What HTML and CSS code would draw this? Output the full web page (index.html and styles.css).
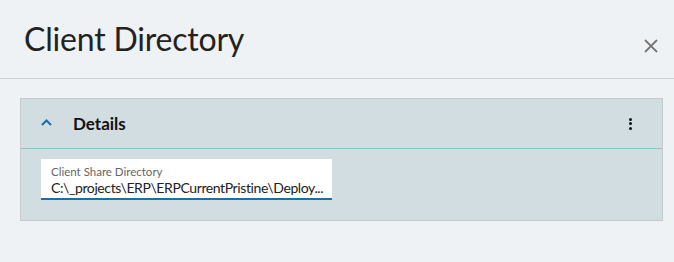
FILE: index.html
```html
<!DOCTYPE html>
<html lang="en">
<head>
    <meta charset="UTF-8">
    <meta name="viewport" content="width=device-width, initial-scale=1.0">
    <title>Client Directory</title>
    <link rel="stylesheet" href="styles.css">
</head>
<body>
    <div class="dialog">
        <div class="dialog-header">
            <h1>Client Directory</h1>
            <button class="close-btn" aria-label="Close">
                <svg width="14" height="14" viewBox="0 0 14 14">
                    <path d="M1 1L13 13M13 1L1 13" stroke="#777" stroke-width="1.8" fill="none"/>
                </svg>
            </button>
        </div>

        <div class="panel">
            <div class="panel-header">
                <span class="chevron">
                    <svg width="11" height="7" viewBox="0 0 11 7">
                        <path d="M1 6L5.5 1.5L10 6" stroke="#1f6e9e" stroke-width="2" fill="none"/>
                    </svg>
                </span>
                <span class="panel-title">Details</span>
                <span class="kebab">
                    <i></i><i></i><i></i>
                </span>
            </div>

            <div class="panel-body">
                <div class="field">
                    <label>Client Share Directory</label>
                    <div class="field-value">C:\_projects\ERP\ERPCurrentPristine\Deploy...</div>
                </div>
            </div>
        </div>
    </div>
</body>
</html>
```

FILE: styles.css
```css
* {
    margin: 0;
    padding: 0;
    box-sizing: border-box;
}

html, body {
    width: 100%;
    height: 100%;
    background-color: #eff2f5;
}

body {
    font-family: Lato, "Liberation Sans", sans-serif;
    color: #222;
}

.dialog-header {
    display: flex;
    align-items: center;
    justify-content: space-between;
    height: 79px;
    padding: 0 16px 0 24px;
    border-bottom: 1px solid #cdd1d4;
}

.dialog-header h1 {
    font-size: 32px;
    font-weight: 400;
    line-height: 40px;
    letter-spacing: -0.2px;
    color: #222;
}

.close-btn {
    display: flex;
    background: none;
    border: none;
    margin-top: 14px;
    cursor: pointer;
}

.panel {
    margin: 19px 11px 0 20px;
    background-color: #d1dde1;
    border: 1px solid #c6cacc;
}

.panel-header {
    display: flex;
    align-items: center;
    height: 50px;
    padding: 0 30px 0 20px;
    border-bottom: 1px solid #8fc3d0;
}

.chevron {
    display: flex;
    width: 32px;
    margin-top: -2px;
}

.panel-title {
    flex: 1;
    font-size: 17px;
    font-weight: 700;
    color: #111;
}

.kebab {
    display: flex;
    flex-direction: column;
    gap: 1.5px;
}

.kebab i {
    display: block;
    width: 3px;
    height: 3px;
    border-radius: 50%;
    background-color: #111;
}

.panel-body {
    padding: 10px 20px 20px 20px;
}

.field {
    width: 291px;
    height: 41px;
    padding: 6px 10px 0 10px;
    background-color: #fff;
    border-bottom: 2px solid #1f6ea0;
}

.field label {
    display: block;
    font-size: 11.5px;
    line-height: 14px;
    color: #666;
}

.field-value {
    font-size: 14px;
    line-height: 18px;
    letter-spacing: -0.4px;
    color: #222;
    white-space: nowrap;
}
```
